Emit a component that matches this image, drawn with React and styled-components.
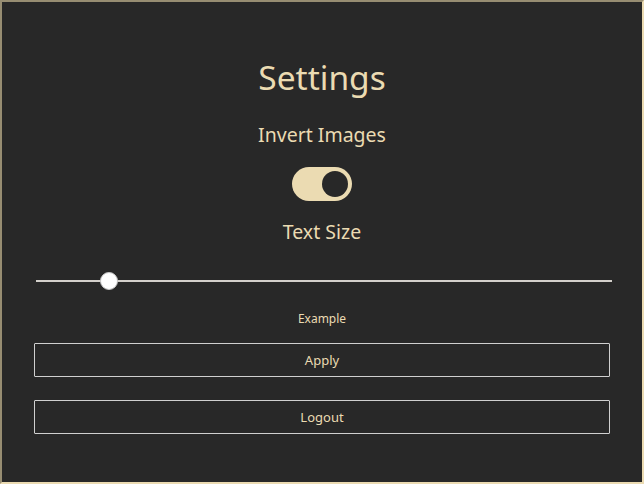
import React, { useState } from "react";
import styled, { createGlobalStyle } from "styled-components";

const GlobalStyle = createGlobalStyle`
  html, body {
    margin: 0;
    padding: 0;
    background: #282828;
  }
  * {
    box-sizing: border-box;
  }
`;

const Page = styled.div`
  width: 644px;
  height: 484px;
  border: 2px inset #ebdbb2;
  background: #282828;
  color: #ebdbb2;
  font-family: "Noto Sans", "Open Sans", sans-serif;
  padding: 0 32px;
  display: flex;
  flex-direction: column;
  align-items: center;
`;

const Title = styled.h1`
  margin: 51px 0 0;
  font-size: 33.5px;
  font-weight: 400;
  line-height: 49px;
`;

const Label = styled.h2`
  margin: ${(p) => p.$top}px 0 0;
  font-size: 19.5px;
  font-weight: 400;
  line-height: 27px;
`;

const SwitchBox = styled.label`
  position: relative;
  display: block;
  width: 60px;
  height: 34px;
  margin-top: 19px;
  cursor: pointer;

  input {
    opacity: 0;
    width: 0;
    height: 0;
  }
`;

const Track = styled.span`
  position: absolute;
  inset: 0;
  border-radius: 34px;
  background: ${(p) => (p.$on ? "#ebdbb2" : "#665c54")};
  transition: background 0.2s;

  &::before {
    content: "";
    position: absolute;
    width: 26px;
    height: 26px;
    left: 4px;
    top: 4px;
    border-radius: 50%;
    background: #282828;
    transform: translateX(${(p) => (p.$on ? 26 : 0)}px);
    transition: transform 0.2s;
  }
`;

const Range = styled.input`
  -webkit-appearance: none;
  appearance: none;
  display: block;
  width: 100%;
  height: 18px;
  margin: 27px 0 0 4px;
  background: transparent;

  &::-webkit-slider-runnable-track {
    height: 2px;
    background: #d3d0cb;
  }
  &::-webkit-slider-thumb {
    -webkit-appearance: none;
    width: 18px;
    height: 18px;
    margin-top: -8px;
    border-radius: 50%;
    background: #ffffff;
    border: 1px solid #c4c4c4;
  }
`;

const Sample = styled.p`
  margin: 21px 0 0;
  font-size: ${(p) => p.$size}px;
  line-height: 16px;
`;

const Button = styled.button`
  display: block;
  width: 100%;
  height: 34px;
  margin-top: ${(p) => p.$top}px;
  background: transparent;
  border: 1px solid #d0d0d0;
  border-radius: 1px;
  color: #ebdbb2;
  font-family: "Noto Sans", "Open Sans", sans-serif;
  font-size: 13px;
  cursor: pointer;
`;

export default function App() {
  const [invert, setInvert] = useState(true);
  const [size, setSize] = useState(11.5);

  return (
    <>
      <GlobalStyle />
      <Page>
        <Title>Settings</Title>
        <Label $top={19}>Invert Images</Label>
        <SwitchBox>
          <input
            type="checkbox"
            checked={invert}
            onChange={() => setInvert(!invert)}
          />
          <Track $on={invert} />
        </SwitchBox>
        <Label $top={17}>Text Size</Label>
        <Range
          type="range"
          min="0"
          max="100"
          step="0.5"
          value={size}
          onChange={(e) => setSize(Number(e.target.value))}
        />
        <Sample $size={12}>Example</Sample>
        <Button $top={16}>Apply</Button>
        <Button $top={23}>Logout</Button>
      </Page>
    </>
  );
}
